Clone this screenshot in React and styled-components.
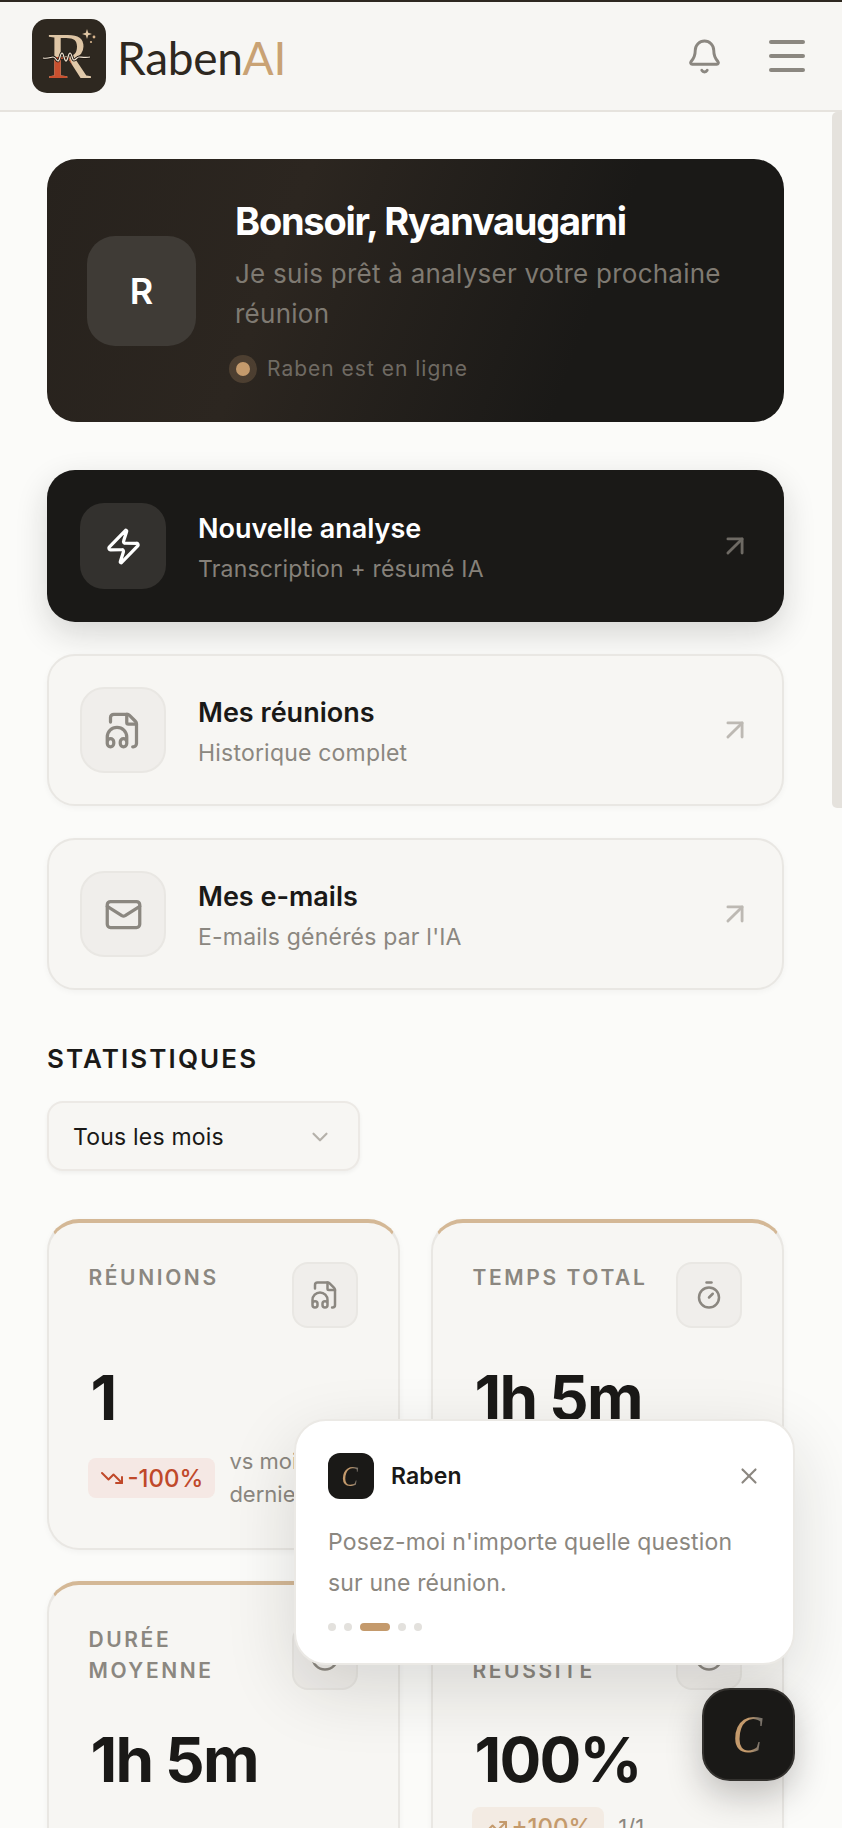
import React from "react";
import styled, { createGlobalStyle } from "styled-components";
import { Bell, Zap, Mail, Timer, X, ChevronDown, ArrowUpRight, TrendingDown, TrendingUp, CircleCheck, Clock, FileHeadphone } from "lucide-react";

const Global = createGlobalStyle`
  html, body { margin: 0; padding: 0; height: 100%; overflow: hidden; background: #fbfbf9; }
  * { box-sizing: border-box; }
  body { font-family: Inter, "Liberation Sans", sans-serif; color: #1a1917; }
`;

const Shell = styled.div`
  position: relative;
  width: 842px;
  height: 1828px;
  overflow: hidden;
  border-top: 2px solid #2e2820;
  display: flex;
  flex-direction: column;
`;
const Header = styled.header`
  flex: none;
  height: 110px;
  background: #f7f6f3;
  border-bottom: 2px solid #e6e3de;
  display: flex;
  align-items: center;
  padding: 0 37px 0 32px;
`;
const Brand = styled.div`
  display: flex;
  align-items: center;
  gap: 11px;
  flex: 1;
`;
const Wordmark = styled.div`
  font-family: Lato, sans-serif;
  font-size: 46px;
  font-weight: 400;
  color: #2e2820;
  line-height: 1;
  letter-spacing: -0.3px;
  padding-top: 3px;
  span { color: #c9a274; }
`;
const HeaderBtn = styled.button`
  border: 0;
  background: none;
  padding: 0;
  display: flex;
  color: #8b8780;
  margin-left: ${p => p.$ml || 0}px;
`;
const Burger = styled.div`
  width: 36px;
  height: 32px;
  display: flex;
  flex-direction: column;
  justify-content: space-between;
  i { display: block; height: 4px; border-radius: 2px; background: #8b8780; }
`;
const Main = styled.main`
  flex: 1;
  overflow: hidden;
  padding: 47px 58px 0 47px;
`;
const Thumb = styled.div`
  position: absolute;
  right: 0;
  top: 110px;
  width: 10px;
  height: 696px;
  background: #e5e2dd;
  border-radius: 5px 0 0 5px;
`;
const Hero = styled.section`
  height: 263px;
  border-radius: 30px;
  background: linear-gradient(110deg, #27221d 0%, #2c2620 32%, #1a1917 72%);
  display: flex;
  align-items: center;
  padding: 0 40px;
  gap: 39px;
  margin-bottom: 48px;
`;
const Avatar = styled.div`
  flex: none;
  width: 109px;
  height: 110px;
  border-radius: 28px;
  background: #3f3b36;
  color: #fff;
  font-size: 36px;
  font-weight: 600;
  display: flex;
  align-items: center;
  justify-content: center;
`;
const HeroText = styled.div`
  min-width: 0;
  padding-top: 1px;
`;
const Greeting = styled.h1`
  margin: 0 0 11px;
  font-size: 38px;
  line-height: 44px;
  font-weight: 700;
  color: #fff;
  letter-spacing: -1.25px;
`;
const HeroSub = styled.p`
  margin: 0;
  font-size: 26px;
  line-height: 40px;
  color: #7f7a72;
  letter-spacing: 0.25px;
`;
const Status = styled.div`
  display: flex;
  align-items: center;
  gap: 10px;
  margin: 21px 0 0 -6px;
  font-size: 21px;
  line-height: 28px;
  letter-spacing: 1px;
  color: #6f6a63;
`;
const Dot = styled.span`
  width: 14px;
  height: 14px;
  margin: 7px;
  border-radius: 50%;
  background: #c49a6c;
  box-shadow: 0 0 0 7px rgba(196, 154, 108, 0.22);
`;
const ActionList = styled.div`
  display: flex;
  flex-direction: column;
  gap: 32px;
  margin-bottom: 53px;
`;
const Action = styled.div`
  height: 152px;
  border-radius: 28px;
  display: flex;
  align-items: center;
  padding: 0 ${p => (p.$dark ? 32 : 30)}px 0 ${p => (p.$dark ? 33 : 31)}px;
  gap: 32px;
  background: ${p => (p.$dark ? "#1a1917" : "#f7f6f3")};
  border: ${p => (p.$dark ? "0" : "2px solid #e9e7e3")};
  box-shadow: ${p => (p.$dark ? "0 12px 32px rgba(26,25,23,0.16)" : "0 2px 6px rgba(26,25,23,0.04)")};
`;
const Tile = styled.div`
  flex: none;
  width: ${p => p.$size}px;
  height: ${p => p.$size}px;
  border-radius: ${p => (p.$size > 80 ? 24 : 16)}px;
  display: flex;
  align-items: center;
  justify-content: center;
  background: ${p => (p.$dark ? "#33312e" : "#f0eeeb")};
  border: ${p => (p.$dark ? "0" : "2px solid #e9e7e3")};
  color: ${p => (p.$dark ? "#fff" : "#8b8780")};
`;
const ActionText = styled.div`
  flex: 1;
  padding-top: 4px;
`;
const ActionTitle = styled.div`
  font-size: 27px;
  line-height: 36px;
  font-weight: 600;
  color: ${p => (p.$dark ? "#fff" : "#1a1917")};
  margin-bottom: 6px;
`;
const ActionSub = styled.div`
  font-size: 23px;
  line-height: 32px;
  letter-spacing: 0.2px;
  color: ${p => (p.$dark ? "#86817a" : "#8b8780")};
`;
const ArrowWrap = styled.div`
  display: flex;
  color: ${p => (p.$dark ? "#6e6a64" : "#bdb9b3")};
`;
const SectionTitle = styled.h2`
  margin: 0 0 26px;
  font-size: 26px;
  line-height: 32px;
  font-weight: 600;
  letter-spacing: 2.1px;
`;
const Select = styled.div`
  width: 313px;
  height: 70px;
  border-radius: 16px;
  background: #f7f6f3;
  border: 2px solid #ece9e5;
  box-shadow: 0 2px 4px rgba(26, 25, 23, 0.05);
  display: flex;
  align-items: center;
  justify-content: space-between;
  padding: 2px 25px 0 24px;
  font-size: 23px;
  letter-spacing: 0.2px;
  margin-bottom: 48px;
  color: #1a1917;
  svg { color: #b5b1aa; }
`;
const StatGrid = styled.div`
  display: grid;
  grid-template-columns: 353px 353px;
  column-gap: 31px;
  row-gap: 31px;
`;
const StatCard = styled.div`
  height: 331px;
  border-radius: 32px;
  background: #f7f6f3;
  border: 2px solid #e9e7e3;
  border-top: 4px solid #d4b896;
  padding: 39px 40px 0 39.5px;
  box-shadow: 0 2px 6px rgba(26, 25, 23, 0.04);
`;
const StatHead = styled.div`
  display: flex;
  justify-content: space-between;
  align-items: flex-start;
  gap: 8px;
  min-height: 66px;
`;
const StatLabel = styled.div`
  font-size: 21px;
  line-height: 31px;
  font-weight: 600;
  letter-spacing: 2.6px;
  color: #8b8780;
`;
const StatValue = styled.div`
  font-size: 62px;
  line-height: 76px;
  font-weight: 700;
  letter-spacing: -1.8px;
  margin: 32px 0 0 2px;
  color: #1a1917;
`;
const StatFoot = styled.div`
  display: flex;
  align-items: center;
  gap: 14px;
  margin: 9px 0 0 -1px;
`;
const Badge = styled.div`
  flex: none;
  height: 40px;
  padding: 0 12px;
  border-radius: 8px;
  display: flex;
  align-items: center;
  gap: 4px;
  font-size: 24px;
  font-weight: 500;
  background: ${p => (p.$up ? "#f3ebe3" : "#f5e8e4")};
  color: ${p => (p.$up ? "#c49a6c" : "#c0492a")};
`;
const FootText = styled.div`
  font-size: 22px;
  line-height: 33px;
  color: #8b8780;
`;
const Popup = styled.aside`
  position: absolute;
  left: 294px;
  top: 1417px;
  width: 501px;
  height: 246px;
  border-radius: 32px;
  background: #fff;
  border: 2px solid #ebe9e5;
  box-shadow: 0 24px 70px rgba(26, 25, 23, 0.14);
  padding: 32px 31px 0 32px;
`;
const PopupHead = styled.div`
  display: flex;
  align-items: center;
  gap: 17px;
  margin-bottom: 23px;
`;
const Mono = styled.div`
  flex: none;
  display: flex;
  align-items: center;
  justify-content: center;
  width: ${p => p.$size}px;
  height: ${p => p.$size}px;
  border-radius: ${p => p.$radius}px;
  background: #1a1917;
`;
const MonoLetter = styled.span`
  display: inline-block;
  font-family: "Liberation Serif", serif;
  font-style: italic;
  font-size: ${p => p.$font}px;
  line-height: 1;
  padding-right: 2px;
  color: transparent;
  background: linear-gradient(90deg, #c49a6c 50%, #7a736a 85%);
  -webkit-background-clip: text;
  background-clip: text;
  transform: scaleX(0.85);
`;
const PopupName = styled.div`
  flex: 1;
  font-size: 23px;
  font-weight: 600;
  letter-spacing: 0.1px;
`;
const PopupMsg = styled.p`
  margin: 0 0 19px;
  font-size: 23px;
  line-height: 41px;
  letter-spacing: 0.15px;
  color: #8b8780;
`;
const Dots = styled.div`
  display: flex;
  align-items: center;
  gap: 8px;
`;
const PageDot = styled.span`
  width: ${p => (p.$active ? 30 : 8)}px;
  height: 8px;
  border-radius: 4px;
  background: ${p => (p.$active ? "#c49a6c" : "#e3e1dd")};
`;
const Fab = styled(Mono)`
  position: absolute;
  left: 702px;
  top: 1686px;
  border: 2px solid #33312e;
  box-shadow: 0 14px 34px rgba(26, 25, 23, 0.25);
`;
const CloseBtn = styled.button`
  border: 0;
  background: none;
  padding: 0;
  display: flex;
  color: #8b8780;
`;

const Logo = () => (
  <svg width="74" height="74" viewBox="0 0 74 74">
    <defs>
      <linearGradient id="rg" x1="0" y1="0" x2="0" y2="1">
        <stop offset="0" stopColor="#dcc3a2" />
        <stop offset="1" stopColor="#e2cbac" />
      </linearGradient>
      <clipPath id="legs">
        <path d="M0 38H37L46 60H0z" />
      </clipPath>
    </defs>
    <rect width="74" height="74" rx="15" fill="#2e2820" />
    <text x="37" y="59" textAnchor="middle" fontFamily="Liberation Serif, serif" fontSize="66" fill="url(#rg)">R</text>
    <text x="37" y="59" textAnchor="middle" fontFamily="Liberation Serif, serif" fontSize="66" fill="#c9502f" clipPath="url(#legs)">R</text>
    <path d="M11 39c5 1 8-1 10-1 3 0 3 4 5 4 2 0 2-8 4-8s2 8 4 8 2-8 4-8 2 7 4 7 3-3 5-3 7 1 11 0" fill="none" stroke="#1f1a15" strokeWidth="3" />
    <path d="M11 39c5 1 8-1 10-1 3 0 3 4 5 4 2 0 2-8 4-8s2 8 4 8 2-8 4-8 2 7 4 7 3-3 5-3 7 1 11 0" fill="none" stroke="#f3e6d4" strokeWidth="1.2" />
    <path d="M55 10l1.2 3.8L60 15l-3.8 1.2L55 20l-1.2-3.8L50 15l3.8-1.2z" fill="#e0c6a4" />
    <circle cx="62" cy="18" r="1.4" fill="#d8b48c" />
    <circle cx="59" cy="23" r="1.1" fill="#d8b48c" />
  </svg>
);

const Arrow = ({ dark }) => (
  <ArrowWrap $dark={dark}><ArrowUpRight size={34} strokeWidth={2} /></ArrowWrap>
);

const actions = [
  { dark: true, title: "Nouvelle analyse", sub: "Transcription + résumé IA", Icon: Zap },
  { title: "Mes réunions", sub: "Historique complet", Icon: FileHeadphone },
  { title: "Mes e-mails", sub: "E-mails générés par l'IA", Icon: Mail },
];

const stats = [
  { label: "RÉUNIONS", value: "1", Icon: FileHeadphone, badge: "-100%", foot: "vs mois dernier" },
  { label: "TEMPS TOTAL", value: "1h 5m", Icon: Timer, badge: "-100%", foot: "vs mois dernier" },
  { label: "DURÉE MOYENNE", value: "1h 5m", Icon: Clock },
  { label: "TAUX DE RÉUSSITE", value: "100%", Icon: CircleCheck, badge: "+100%", up: true, foot: "1/1" },
];

export default function App() {
  return (
    <Shell>
      <Global />
      <Header>
        <Brand>
          <Logo />
          <Wordmark>Raben<span>AI</span></Wordmark>
        </Brand>
        <HeaderBtn><Bell size={37} strokeWidth={1.9} /></HeaderBtn>
        <HeaderBtn $ml={46}><Burger><i /><i /><i /></Burger></HeaderBtn>
      </Header>
      <Main>
        <Hero>
          <Avatar>R</Avatar>
          <HeroText>
            <Greeting>Bonsoir, Ryanvaugarni</Greeting>
            <HeroSub>Je suis prêt à analyser votre prochaine réunion</HeroSub>
            <Status><Dot />Raben est en ligne</Status>
          </HeroText>
        </Hero>
        <ActionList>
          {actions.map(({ dark, title, sub, Icon }) => (
            <Action key={title} $dark={dark}>
              <Tile $size={86} $dark={dark}><Icon size={39} strokeWidth={2} /></Tile>
              <ActionText>
                <ActionTitle $dark={dark}>{title}</ActionTitle>
                <ActionSub $dark={dark}>{sub}</ActionSub>
              </ActionText>
              <Arrow dark={dark} />
            </Action>
          ))}
        </ActionList>
        <SectionTitle>STATISTIQUES</SectionTitle>
        <Select>Tous les mois<ChevronDown size={26} strokeWidth={2} /></Select>
        <StatGrid>
          {stats.map(({ label, value, Icon, badge, up, foot }) => (
            <StatCard key={label}>
              <StatHead>
                <StatLabel>{label}</StatLabel>
                <Tile $size={66}><Icon size={30} strokeWidth={2} /></Tile>
              </StatHead>
              <StatValue>{value}</StatValue>
              {badge && (
                <StatFoot>
                  <Badge $up={up}>
                    {up ? <TrendingUp size={24} strokeWidth={2} /> : <TrendingDown size={24} strokeWidth={2} />}
                    {badge}
                  </Badge>
                  <FootText>{foot}</FootText>
                </StatFoot>
              )}
            </StatCard>
          ))}
        </StatGrid>
      </Main>
      <Thumb />
      <Popup>
        <PopupHead>
          <Mono $size={46} $radius={12}><MonoLetter $font={29}>C</MonoLetter></Mono>
          <PopupName>Raben</PopupName>
          <CloseBtn><X size={26} strokeWidth={2} /></CloseBtn>
        </PopupHead>
        <PopupMsg>Posez-moi n'importe quelle question sur une réunion.</PopupMsg>
        <Dots>
          <PageDot /><PageDot /><PageDot $active /><PageDot /><PageDot />
        </Dots>
      </Popup>
      <Fab $size={93} $radius={28}><MonoLetter $font={52}>C</MonoLetter></Fab>
    </Shell>
  );
}
